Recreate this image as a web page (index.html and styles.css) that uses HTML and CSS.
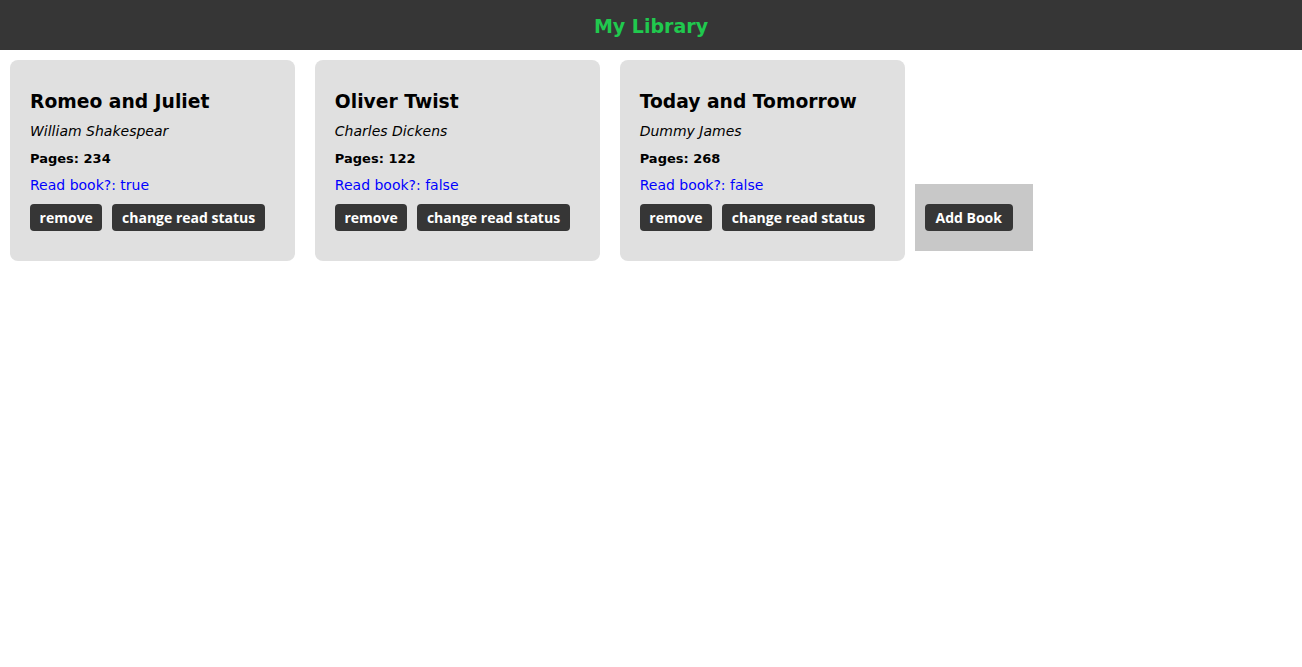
FILE: index.html
```html
<!DOCTYPE html>
<html lang="en">
<head>
<meta charset="utf-8">
<title>My Library</title>
<link rel="stylesheet" href="styles.css">
</head>
<body>
<header class="topbar">
  <h1 class="brand">My Library</h1>
</header>
<main class="library">
  <div class="card">
    <h3 class="title">Romeo and Juliet</h3>
    <p class="author">William Shakespear</p>
    <p class="pages">Pages: 234</p>
    <p class="status">Read book?: true</p>
    <div class="actions"><button class="btn">remove</button><button class="btn">change read status</button></div>
  </div>
  <div class="card">
    <h3 class="title">Oliver Twist</h3>
    <p class="author">Charles Dickens</p>
    <p class="pages">Pages: 122</p>
    <p class="status">Read book?: false</p>
    <div class="actions"><button class="btn">remove</button><button class="btn">change read status</button></div>
  </div>
  <div class="card">
    <h3 class="title">Today and Tomorrow</h3>
    <p class="author">Dummy James</p>
    <p class="pages">Pages: 268</p>
    <p class="status">Read book?: false</p>
    <div class="actions"><button class="btn">remove</button><button class="btn">change read status</button></div>
  </div>
  <div class="add-box">
    <button class="btn btn-add">Add Book</button>
  </div>
</main>
</body>
</html>
```

FILE: styles.css
```css
* { box-sizing: border-box; }
html, body { margin: 0; padding: 0; background: #ffffff; }
body { font-family: "DejaVu Sans", sans-serif; color: #000; }

.topbar {
  height: 50px;
  background: #363636;
  display: flex;
  align-items: center;
  justify-content: center;
}
.brand {
  margin: 0;
  padding-top: 2px;
  font-size: 19px;
  font-weight: bold;
  color: #20c94e;
}

.library {
  display: flex;
  align-items: last baseline;
}

.card {
  margin: 10px;
  padding: 20px;
  background: #e0e0e0;
  border-radius: 8px;
}
.card > * { margin: 10px 0; }

.title {
  font-size: 18.72px;
  line-height: 23px;
  font-weight: bold;
}
.author {
  font-size: 14px;
  line-height: 17px;
  font-style: italic;
}
.pages {
  font-size: 13px;
  line-height: 17px;
  font-weight: bold;
}
.status {
  font-size: 14px;
  line-height: 17px;
  color: #0000ff;
}
.actions { line-height: 27px; white-space: nowrap; }

.btn {
  display: inline-block;
  vertical-align: baseline;
  margin: 0 10px 0 0;
  padding: 5px 9.6px;
  height: 27px;
  border: none;
  border-radius: 4px;
  background: #363636;
  color: #ffffff;
  font-family: "Open Sans", sans-serif;
  font-size: 14px;
  line-height: 17px;
  font-weight: 700;
}
.btn-add { padding: 5px 11px; }

.add-box {
  padding: 20px 10px;
  background: #c8c8c8;
  line-height: 27px;
}
```
